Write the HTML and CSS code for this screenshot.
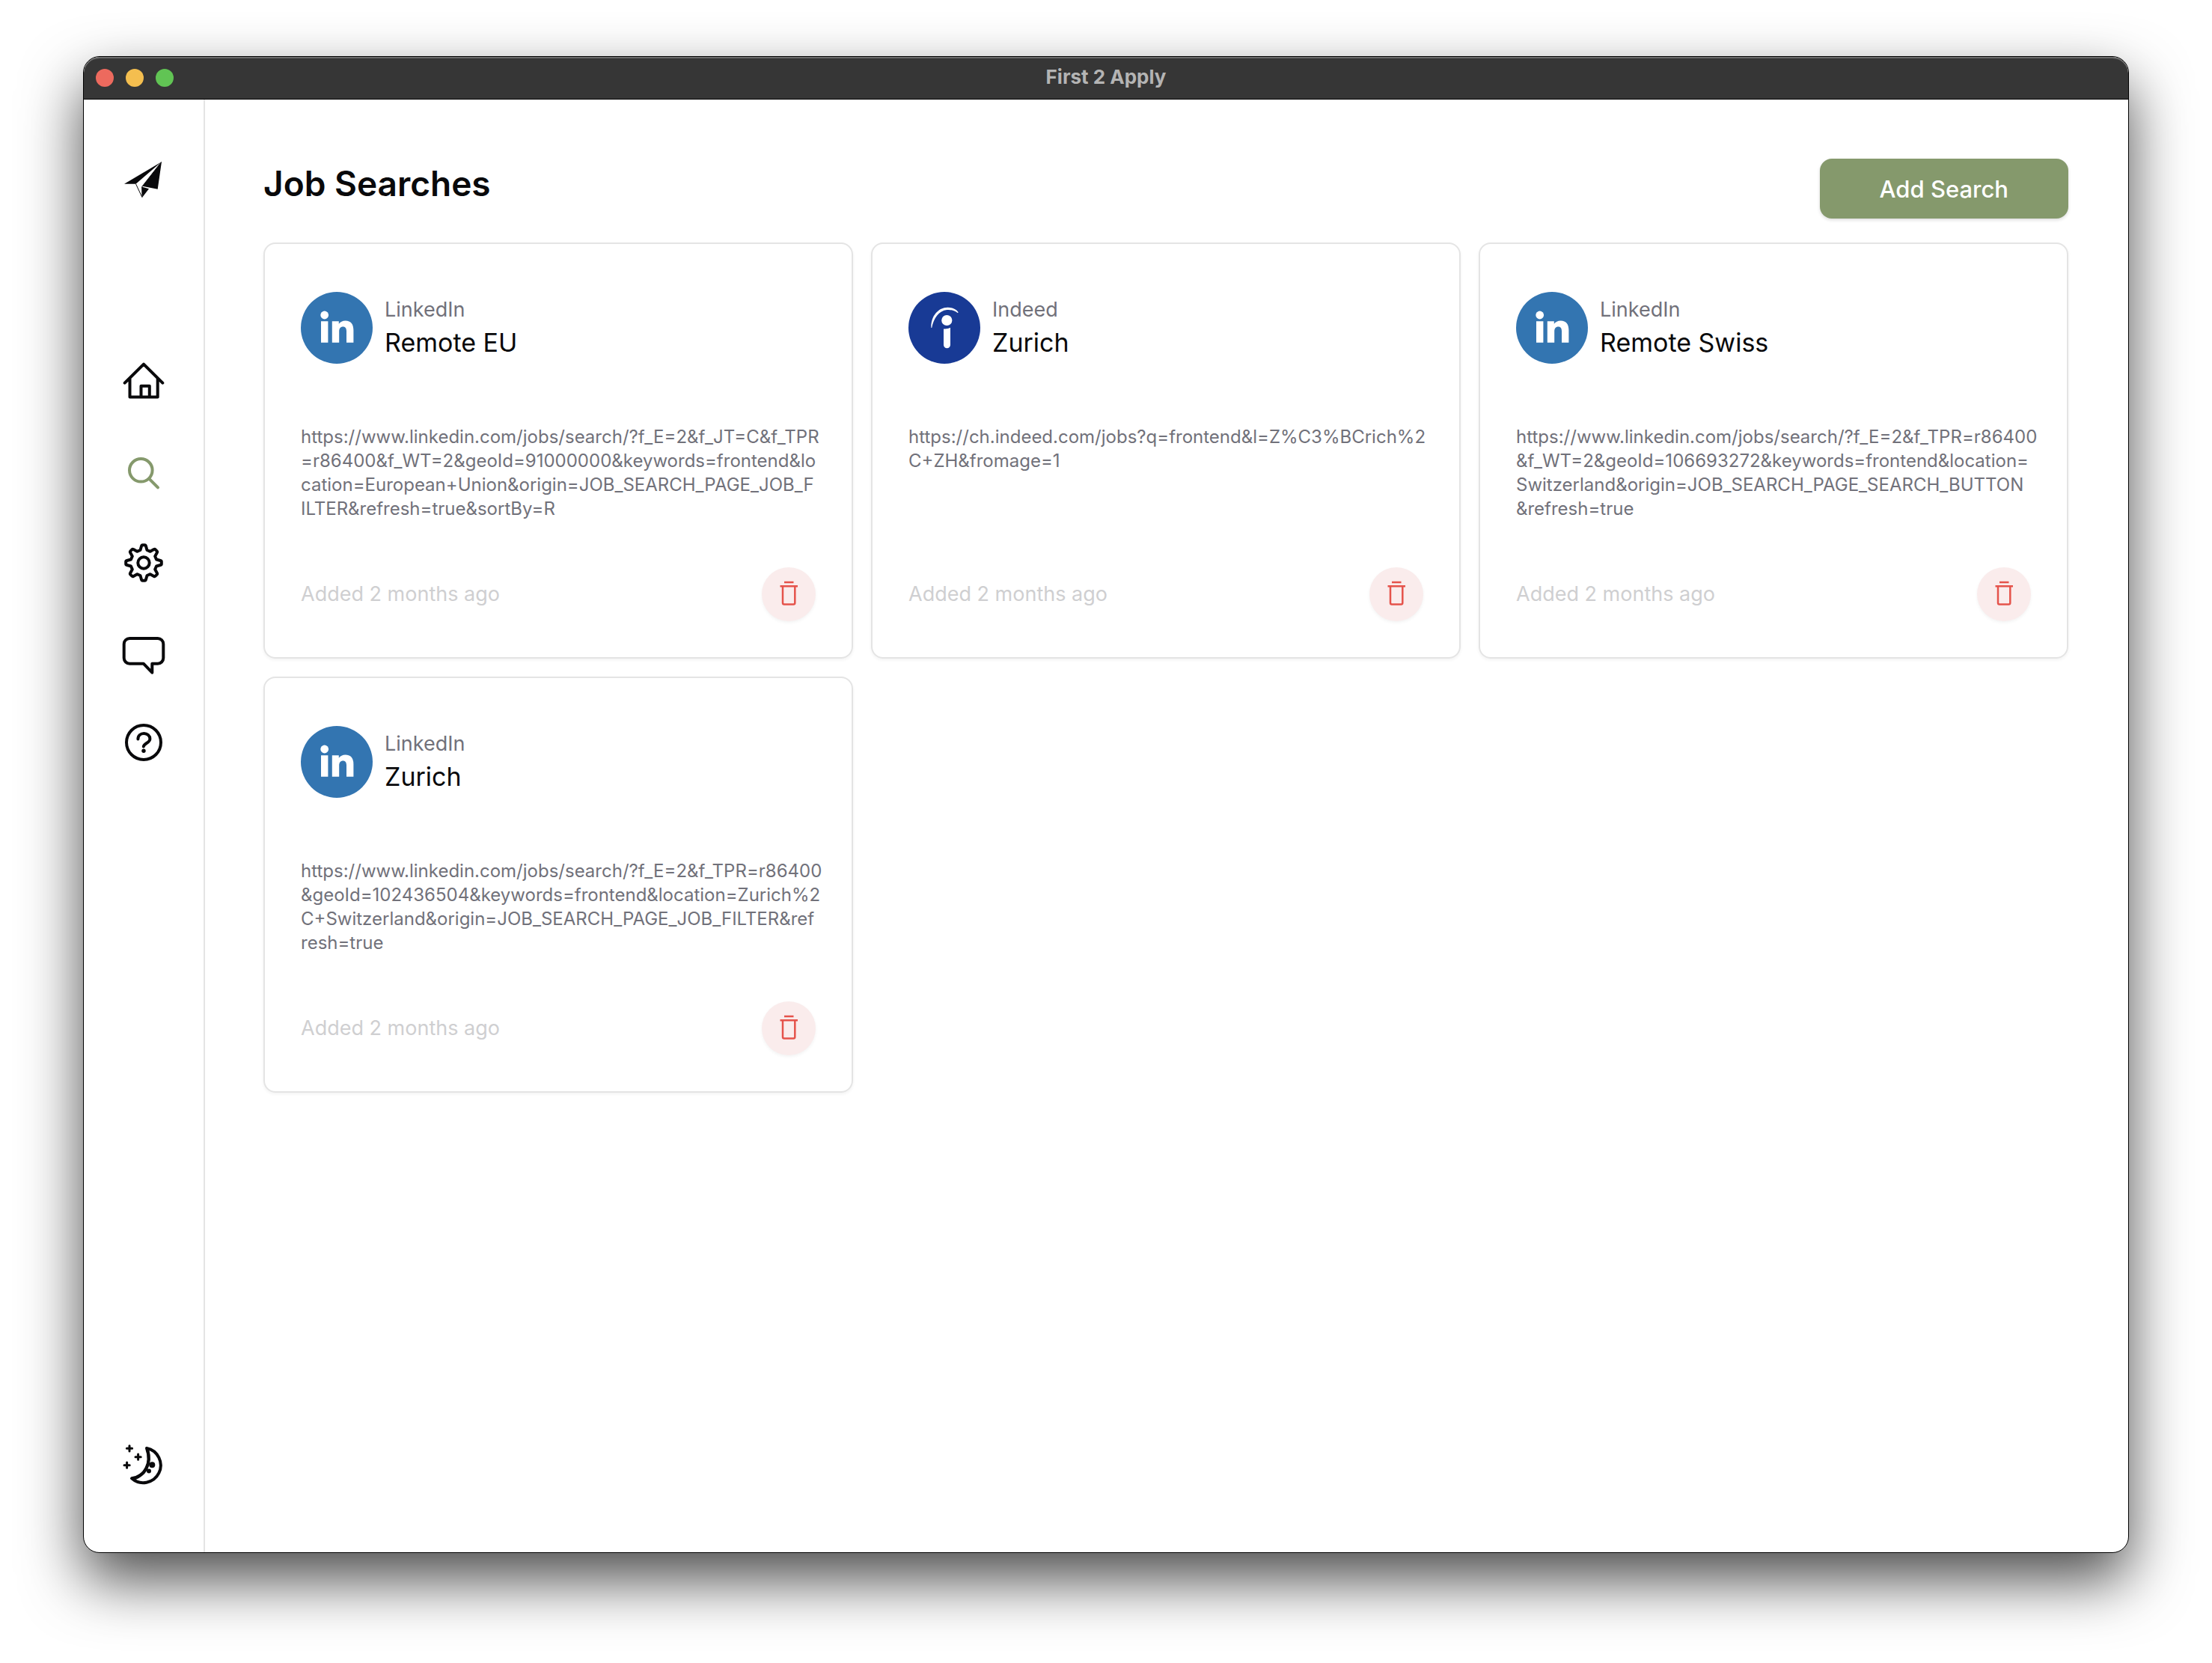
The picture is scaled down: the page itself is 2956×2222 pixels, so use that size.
FILE: index.html
```html
<!DOCTYPE html>
<html lang="en">
<head>
<meta charset="utf-8">
<title>First 2 Apply</title>
<link rel="stylesheet" href="styles.css">
</head>
<body>
<svg class="defs" aria-hidden="true">
  <symbol id="linkedin" viewBox="0 0 96 96">
    <circle cx="48" cy="48" r="48" fill="#3375b1"/>
    <g fill="#fff"><circle cx="31.7" cy="31" r="5.4"/><path d="M27 39.2h9.4v28.6H27zM41.8 39.2h9v3.6c1.8-2.8 5-4.4 8.8-4.400 7.600 0 10.800 5 10.800 12.600v16.800H61V52.600c0-3.800-1.200-6.200-4.600-6.200-3.600 0-5.200 2.600-5.200 6.400v15h-9.400z"/></g>
  </symbol>
  <symbol id="indeed" viewBox="0 0 96 96">
    <circle cx="48" cy="48" r="48" fill="#183a95"/>
    <g fill="#fff"><circle cx="51.3" cy="38" r="7.1"/><path d="M47 49.4c3 .4 6.4-.2 9-1.6v23a4.5 4.5 0 0 1-9 0zM30.4 48C29.8 33 39.5 20.8 52.5 20.8c5.500 0 11 2.400 13.600 5.600.8 1.200.2 1.900-.8 1.300C61 24.800 56.500 23.500 51.500 24 40.500 25.200 33.500 35.500 31.200 48z"/></g>
  </symbol>
  <symbol id="trash" viewBox="0 0 72 72">
    <path d="M30 20h12.500M24.500 25.300h23.500M28 25.300v22.200a2 2 0 0 0 2 2h12.300a2 2 0 0 0 2-2V25.300" fill="none" stroke="#e5534b" stroke-width="2.5"/>
  </symbol>
</svg>
<div class="window">
  <header class="titlebar">
    <div class="lights"><span class="light red"></span><span class="light yellow"></span><span class="light green"></span></div>
    <div class="app-name">First 2 Apply</div>
  </header>
  <div class="body">
    <nav class="sidebar">
      <a class="brand" href="#" aria-label="First 2 Apply"><svg class="icon" viewBox="0 0 60 60"><path d="M4 35.7 53.5 6.5 19.5 35.7z" fill="currentColor"/><path d="M54 6 48.7 42.8 28.3 38.8zM27.3 39.6 37 42.2 28.3 53.6z" fill="currentColor"/><path d="M19.5 35.7 27.9 53.5V39.3L53.5 6.5" fill="none" stroke="currentColor" stroke-width="1"/></svg></a>
      <div class="links">
        <a href="#" aria-label="Home"><svg class="icon line" viewBox="0 0 60 60"><path d="M4.7 29.7 30 4.6 55.3 29.7M11.500 24v24.500h37.200V24M26.500 48V33.800h11.300V48"/></svg></a>
        <a class="active" href="#" aria-label="Job searches"><svg class="icon line" viewBox="0 0 60 60"><circle cx="26.3" cy="26.3" r="15.3"/><path d="M37.5 37.8 49 49.3"/></svg></a>
        <a href="#" aria-label="Settings"><svg class="icon line" viewBox="0 0 60 60"><circle cx="30" cy="30" r="7.7"/><path d="M25.5 13 27 7.7Q27.400 6.200 28.500 6.200H31.500Q32.600 6.200 33 7.700L34.500 13 38.800 14.800 43.700 12.100Q44.900 11.500 45.700 12.300L47.700 14.300Q48.500 15.100 47.900 16.300L45.200 21.200 47 25.500 52.300 27Q53.800 27.400 53.800 28.500V31.500Q53.800 32.600 52.300 33L47 34.500 45.200 38.800 47.900 43.700Q48.500 44.900 47.700 45.700L45.700 47.700Q44.900 48.500 43.700 47.900L38.800 45.200 34.500 47 33 52.300Q32.600 53.800 31.500 53.800H28.500Q27.400 53.800 27 52.300L25.500 47 21.200 45.200 16.300 47.900Q15.100 48.500 14.300 47.700L12.300 45.700Q11.500 44.900 12.100 43.700L14.800 38.800 13 34.500 7.700 33Q6.200 32.600 6.200 31.500V28.500Q6.200 27.400 7.700 27L13 25.500 14.800 21.200 12.100 16.300Q11.500 15.100 12.300 14.300L14.300 12.300Q15.100 11.500 16.300 12.100L21.200 14.800Z"/></svg></a>
        <a href="#" aria-label="Feedback"><svg class="icon line" viewBox="0 0 60 60"><path d="M11.2 11h37.6a7.5 7.5 0 0 1 7.5 7.5v18.7a7.5 7.5 0 0 1-7.5 7.5h-7.5v12L29.7 44.7H11.2a7.5 7.5 0 0 1-7.5-7.5V18.5A7.5 7.5 0 0 1 11.2 11z"/></svg></a>
        <a href="#" aria-label="Help"><svg class="icon line" viewBox="0 0 60 60"><circle cx="30" cy="30" r="23"/><path d="M22.4 25.6C22.4 21 26 18 30.4 18s8 3 8 7.2c0 5.3-8 6-8.6 10.3"/><circle cx="30" cy="41.3" r="2.7" fill="currentColor" stroke="none"/></svg></a>
      </div>
      <button class="theme" type="button" aria-label="Toggle theme"><svg class="icon line" viewBox="0 0 60 60"><path d="M34 7A23.3 23.3 0 1 1 14 47.3C31 45 42 29 34 7z"/><path d="M35.500 10C40 27 32 42 18 47.300"/><circle cx="41.3" cy="29.3" r="4" fill="currentColor" stroke="none"/><circle cx="37" cy="37.5" r="3" fill="currentColor" stroke="none"/><path d="M11 3.7v7.2M7.4 7.3h7.2M22.6 15.1v7.2M19 18.7h7.2M7.6 26.1v7.2M4 29.7h7.2" stroke-width="3"/></svg></button>
    </nav>
    <main class="main">
      <div class="page-head">
        <h1>Job Searches</h1>
        <button class="add" type="button">Add Search</button>
      </div>
      <div class="grid">
        <article class="card">
          <div class="card-head"><svg class="logo"><use href="#linkedin"/></svg><div><p class="site">LinkedIn</p><h2>Remote EU</h2></div></div>
          <p class="url">https://www.linkedin.com/jobs/search/?f_E=2&amp;f_JT=C&amp;f_TPR<wbr>=r86400&amp;f_WT=2&amp;geoId=91000000&amp;keywords=frontend&amp;lo<wbr>cation=European+Union&amp;origin=JOB_SEARCH_PAGE_JOB_F<wbr>ILTER&amp;refresh=true&amp;sortBy=R</p>
          <div class="card-foot"><span class="added">Added 2 months ago</span><button class="delete" type="button" aria-label="Delete search"><svg><use href="#trash"/></svg></button></div>
        </article>
        <article class="card">
          <div class="card-head"><svg class="logo"><use href="#indeed"/></svg><div><p class="site">Indeed</p><h2>Zurich</h2></div></div>
          <p class="url">https://ch.indeed.com/jobs?q=frontend&amp;l=Z%C3%BCrich%2<wbr>C+ZH&amp;fromage=1</p>
          <div class="card-foot"><span class="added">Added 2 months ago</span><button class="delete" type="button" aria-label="Delete search"><svg><use href="#trash"/></svg></button></div>
        </article>
        <article class="card">
          <div class="card-head"><svg class="logo"><use href="#linkedin"/></svg><div><p class="site">LinkedIn</p><h2>Remote Swiss</h2></div></div>
          <p class="url">https://www.linkedin.com/jobs/search/?f_E=2&amp;f_TPR=r86400<wbr>&amp;f_WT=2&amp;geoId=106693272&amp;keywords=frontend&amp;location=<wbr>Switzerland&amp;origin=JOB_SEARCH_PAGE_SEARCH_BUTTON<wbr>&amp;refresh=true</p>
          <div class="card-foot"><span class="added">Added 2 months ago</span><button class="delete" type="button" aria-label="Delete search"><svg><use href="#trash"/></svg></button></div>
        </article>
        <article class="card">
          <div class="card-head"><svg class="logo"><use href="#linkedin"/></svg><div><p class="site">LinkedIn</p><h2>Zurich</h2></div></div>
          <p class="url">https://www.linkedin.com/jobs/search/?f_E=2&amp;f_TPR=r86400<wbr>&amp;geoId=102436504&amp;keywords=frontend&amp;location=Zurich%2<wbr>C+Switzerland&amp;origin=JOB_SEARCH_PAGE_JOB_FILTER&amp;ref<wbr>resh=true</p>
          <div class="card-foot"><span class="added">Added 2 months ago</span><button class="delete" type="button" aria-label="Delete search"><svg><use href="#trash"/></svg></button></div>
        </article>
      </div>
    </main>
  </div>
</div>
</body>
</html>
```
FILE: styles.css
```css
* { box-sizing: border-box; margin: 0; }
body {
  min-height: 100vh;
  padding: 75px 111px 147px;
  display: flex;
  background: #fff;
  color: #09090b;
  font-family: Inter, "Liberation Sans", sans-serif;
}
button { border: 0; padding: 0; font: inherit; color: inherit; background: none; cursor: pointer; }
a { color: inherit; text-decoration: none; }
.defs { position: absolute; width: 0; height: 0; }
.window {
  flex: 1;
  display: flex;
  flex-direction: column;
  border: 1px solid #000;
  border-radius: 22px;
  background: #fff;
  overflow: hidden;
  box-shadow: 0 36px 80px rgba(0, 0, 0, .7);
}
.titlebar {
  display: grid;
  grid-template-columns: 1fr auto 1fr;
  align-items: center;
  height: 57px;
  padding: 0 16px;
  border-bottom: 1px solid #000;
  border-radius: 21px 21px 0 0;
  background: #363636;
  box-shadow: inset 0 2px 0 #6c6c6c;
}
.lights { display: flex; gap: 16px; }
.light { width: 24px; height: 24px; border-radius: 50%; }
.red { background: #ed6a5e; }
.yellow { background: #f4be4f; }
.green { background: #61c454; }
.app-name { padding-bottom: 2px; font-size: 26px; line-height: 32px; font-weight: 700; color: #b4b4b4; }
.body { flex: 1; display: flex; }
.sidebar {
  flex: none;
  width: 162px;
  display: flex;
  flex-direction: column;
  align-items: center;
  padding: 77px 0 86px;
  border-right: 2px solid #e4e4e4;
}
.icon { display: block; width: 60px; height: 60px; }
.line { fill: none; stroke: currentColor; stroke-width: 4; stroke-linecap: round; stroke-linejoin: round; }
.links { display: flex; flex-direction: column; gap: 60px; margin-top: 212px; }
.active { color: #85996c; }
.theme { margin-top: auto; }
.main { flex: 1; min-width: 0; padding: 79px 80px 79px 78px; }
.page-head { display: flex; justify-content: space-between; align-items: flex-start; margin-bottom: 32px; }
h1 { font-size: 46px; line-height: 66px; font-weight: 600; }
.add {
  height: 80px;
  padding: 0 80px;
  border-radius: 16px;
  background: #85996c;
  color: #fff;
  font-size: 31px;
  font-weight: 500;
  box-shadow: 0 2px 4px rgba(0, 0, 0, .14);
}
.grid { display: grid; grid-template-columns: repeat(3, minmax(0, 1fr)); gap: 24px; }
.card {
  display: flex;
  flex-direction: column;
  padding: 64px 48px 48px;
  border: 2px solid #e4e4e4;
  border-radius: 16px;
  box-shadow: 0 2px 4px rgba(0, 0, 0, .05);
}
.card-head { display: flex; align-items: center; gap: 16px; }
.logo { flex: none; width: 96px; height: 96px; }
.site { font-size: 27px; line-height: 40px; color: #71717a; }
h2 { font-size: 34px; line-height: 48px; font-weight: 400; }
.url {
  min-height: 128px;
  margin: 82px 0 62px;
  font-size: 24px;
  line-height: 32px;
  color: #71717a;
  white-space: nowrap;
}
.card-foot { display: flex; justify-content: space-between; align-items: center; margin-top: auto; }
.added { font-size: 27px; line-height: 40px; color: #cfcfd1; }
.delete { width: 72px; height: 72px; border-radius: 50%; background: #faecec; box-shadow: 0 2px 4px rgba(0, 0, 0, .05); }
.delete svg { display: block; width: 72px; height: 72px; }
```
